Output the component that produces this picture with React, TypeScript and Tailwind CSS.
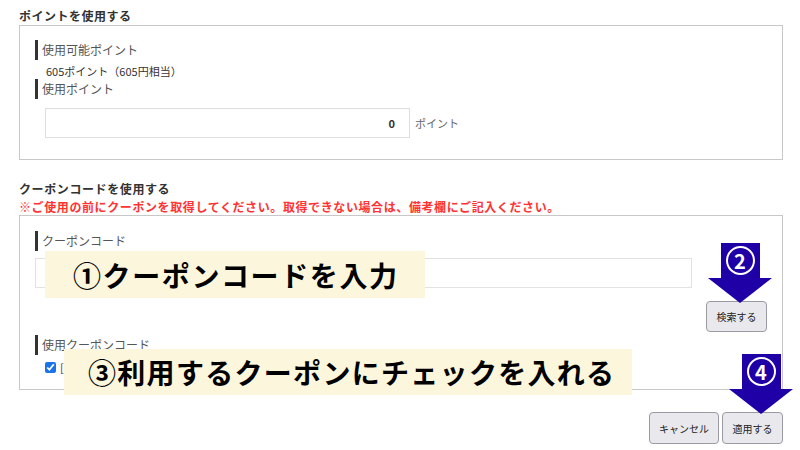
import React from 'react';

const jp = { fontFamily: '"Noto Sans CJK JP", "Noto Sans", sans-serif' };

function Label({ children }: { children: React.ReactNode }) {
  return (
    <div className="flex items-center h-[20px] border-l-[3px] border-[#333] pl-[4px] text-[12px] text-[#555] leading-[20px]">
      {children}
    </div>
  );
}

function Arrow({ num, className }: { num: string; className: string }) {
  return (
    <div className={`absolute flex flex-col items-center ${className}`}>
      <div className="w-[39px] h-[35px] bg-[#1e00a6] flex items-center justify-center">
        <div className="w-[29px] h-[29px] rounded-full border-2 border-white flex items-center justify-center text-white text-[20px] font-bold leading-none">
          {num}
        </div>
      </div>
      <div className="w-0 h-0 border-l-[32px] border-r-[32px] border-t-[25px] border-l-transparent border-r-transparent border-t-[#1e00a6]" />
    </div>
  );
}

export default function App() {
  return (
    <div className="relative w-[800px] h-[450px] bg-white overflow-hidden pl-[19px] pr-[17px] pt-[8px]" style={jp}>
      <div className="text-[12px] font-bold text-[#333] leading-[16px] tracking-[0.5px]">ポイントを使用する</div>
      <div className="mt-[1px] h-[135px] border border-[#c8c8c8] pl-[15px] pt-[14px]">
        <Label>使用可能ポイント</Label>
        <div className="pl-[11px] h-[19px] text-[11px] text-[#333] leading-[22px]">605ポイント（605円相当）</div>
        <Label>使用ポイント</Label>
        <div className="flex items-center mt-[9px] pl-[10px]">
          <div className="w-[365px] h-[30px] border border-[#ddd] flex items-center justify-end pr-[14px] text-[11px] font-bold text-[#333]">
            0
          </div>
          <span className="ml-[5px] text-[11px] text-[#666]">ポイント</span>
        </div>
      </div>

      <div className="mt-[21px] text-[12px] font-bold text-[#333] leading-[16px] tracking-[0.6px]">クーポンコードを使用する</div>
      <div className="mt-[2px] text-[12px] font-bold text-[#f33] leading-[16px] tracking-[0.6px]">
        ※ご使用の前にクーポンを取得してください。取得できない場合は、備考欄にご記入ください。
      </div>
      <div className="h-[175px] border border-[#c8c8c8] pl-[15px] pt-[15px]">
        <Label>クーポンコード</Label>
        <div className="mt-[7px] w-[657px] h-[30px] border border-[#e2e2e2]" />
        <div className="flex justify-end pr-[15px] mt-[13px]">
          <button className="w-[61px] h-[31px] rounded-[4px] border border-[#9a9aa4] bg-[#e9e9ed] text-[10px] text-[#222]">検索する</button>
        </div>
        <div className="mt-[3px]">
          <Label>使用クーポンコード</Label>
        </div>
        <div className="flex items-center pl-[10px] mt-[4px] text-[11px] text-[#333]">
          <input type="checkbox" defaultChecked className="w-[11px] h-[11px] m-0 accent-[#1a73e8]" />
          <span className="ml-[4px]">[</span>
        </div>
      </div>

      <div className="flex justify-end gap-[3px] mt-[22px]">
        <button className="w-[70px] h-[32px] rounded-[4px] border border-[#9a9aa4] bg-[#e9e9ed] text-[10px] text-[#222]">キャンセル</button>
        <button className="w-[61px] h-[32px] rounded-[4px] border border-[#9a9aa4] bg-[#e9e9ed] text-[10px] text-[#222]">適用する</button>
      </div>

      <div className="absolute left-[45px] top-[251px] w-[380px] h-[47px] bg-[#fbf6dc] pl-[28px] flex items-center text-[28px] font-bold text-black tracking-[1.6px]">
        ①クーポンコードを入力
      </div>
      <div className="absolute left-[64px] top-[349px] w-[568px] h-[46px] bg-[#fbf6dc] pl-[24px] flex items-center text-[28px] font-bold text-black tracking-[1.3px]">
        ③利用するクーポンにチェックを入れる
      </div>

      <Arrow num="2" className="left-[708px] top-[243px]" />
      <Arrow num="4" className="left-[729px] top-[354px]" />
    </div>
  );
}
